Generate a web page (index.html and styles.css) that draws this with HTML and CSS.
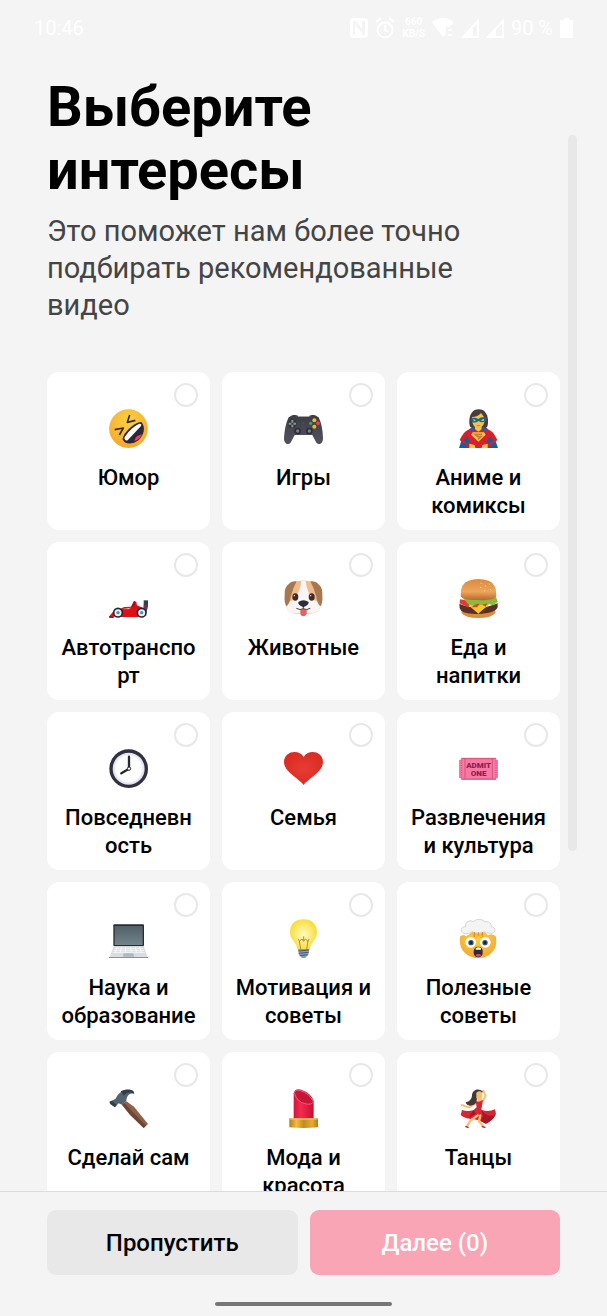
FILE: index.html
```
<!DOCTYPE html>
<html lang="ru">
  <head>
    <meta charset="UTF-8" />
    <meta name="viewport" content="width=device-width, initial-scale=1.0" />
    <title>Выберите интересы</title>
    <link rel="stylesheet" href="styles.css">
  </head>
  <body>
    <header class="status">
      <span>10:46</span>
      <div class="status-icons">
        <svg width="18" height="20" viewBox="0 0 18 20"><path fill="#fff" fill-rule="evenodd" d="M2 0H16L18 2V18L16 20H2L0 18V2ZM3 3V17H5V7L12 15V17H15V3H12V11L6 3Z"/></svg>
        <svg width="20" height="22" viewBox="0 0 20 22" fill="none" stroke="#fff" stroke-width="2"><circle cx="10" cy="13" r="7.5"/><path d="M10 8V13L13 15M1 5L6 1M19 5L14 1"/></svg>
        <div class="speed"><span>660</span><span>KB/S</span></div>
        <svg width="22" height="20" viewBox="0 0 22 20"><path fill="#fff" d="M0 4Q11 -4 22 4L18 9H14V16L11 19Z"/><path stroke="#fff" stroke-width="2" d="M16 12H20M16 17H20"/></svg>
        <svg width="18" height="20" viewBox="0 0 18 20"><path fill="none" stroke="#fff" stroke-width="2" d="M2 19L17 3V19Z"/><path fill="#fff" d="M0 20L12 7V20Z"/></svg>
        <svg width="18" height="20" viewBox="0 0 18 20"><path fill="none" stroke="#fff" stroke-width="2" d="M2 19L17 3V19Z"/><path fill="#fff" d="M0 20L10 9V20Z"/></svg>
        <span>90 %</span>
        <svg width="13" height="20" viewBox="0 0 13 20"><path fill="#fff" d="M4 0H9V2H12L13 3V19L12 20H1L0 19V3L1 2H4Z"/></svg>
      </div>
    </header>

    <main class="content">
      <h1>Выберите интересы</h1>
      <p class="hint">Это поможет нам более точно подбирать рекомендованные видео</p>

      <div class="grid">
        <label class="card">
          <input type="checkbox" name="interest" value="humor" />
          <svg class="emoji" viewBox="0 0 117 117">
            <defs><radialGradient id="face" cx=".5" cy=".3" r=".75"><stop offset="0" stop-color="#fdd043"/><stop offset="1" stop-color="#f3a52f"/></radialGradient></defs>
            <circle cx="58.500" cy="59" r="58" fill="url(#face)"/>
            <path fill="none" stroke="#382d2e" stroke-width="5" stroke-linejoin="round" d="M62 18L55 40L79 34M17 62L43 57L31 78"/>
            <path fill="#2c2636" d="M41 91C40 76 74 39 97 39C111 54 105 78 89 93C72 107 46 108 41 91Z"/>
            <path fill="#fff" d="M46 87C52 74 72 52 91 44Q99 43 96 51L56 94Q48 97 46 87Z"/>
            <path fill="#e34854" d="M76 96Q79 80 99 76Q91 94 76 96Z"/>
          </svg>
          <span class="name">Юмор</span>
        </label>

        <label class="card">
          <input type="checkbox" name="interest" value="games" />
          <svg class="emoji" viewBox="0 0 117 117">
            <defs><linearGradient id="pad" x2="0" y2="1"><stop offset="0" stop-color="#3d3d46"/><stop offset="1" stop-color="#53515f"/></linearGradient></defs>
            <path fill="#292a31" d="M17 23Q26 15 42 20V25H76V20Q92 15 101 23Z"/>
            <path fill="url(#pad)" d="M14 25Q26 16 42 23H76Q92 16 104 25Q116 50 117 88C117 108 101 109 96 99L85 78H32L21 99C16 109 0 108 0 88Q2 50 14 25Z"/>
            <circle cx="25" cy="44" r="13" fill="#34343c"/>
            <path stroke="#8b929b" stroke-width="6" d="M25 33V41M25 47V55M14 44H22M28 44H36"/>
            <circle cx="41" cy="66" r="10" fill="#2d2d35"/><circle cx="41" cy="66" r="5" fill="#75808a"/>
            <circle cx="76" cy="66" r="10" fill="#2d2d35"/><circle cx="76" cy="66" r="5" fill="#75808a"/>
            <circle cx="58" cy="43" r="4" fill="#31594f"/>
            <circle cx="91" cy="34" r="6" fill="#f4b82e"/><circle cx="102" cy="43" r="6" fill="#e8433e"/>
            <circle cx="80" cy="43" r="5" fill="#37a55d"/><circle cx="91" cy="53" r="6" fill="#eeb62f"/>
          </svg>
          <span class="name">Игры</span>
        </label>

        <label class="card">
          <input type="checkbox" name="interest" value="anime" />
          <svg class="emoji" viewBox="0 0 117 117">
            <path fill="#165f9e" d="M39 54L80 54Q104 72 117 117H0Q12 72 39 54Z"/>
            <path fill="#4c3c3b" d="M34 54C28 44 28 1 59 1S90 44 84 54Q74 60 59 60T34 54Z"/>
            <path fill="#d4212c" d="M38 61H78C98 62 104 72 115 93L86 117L78 106V117H38V106L31 117L2 93C14 72 20 62 38 61Z"/>
            <path fill="#165f9e" d="M22 83L33 97L28 106L14 94ZM94 83L83 97L88 106L103 94Z"/>
            <path fill="#f6c346" d="M48 45H68V61L58 68L48 61ZM39 24Q56 24 66 12L78 28Q77 56 58 58Q40 56 39 30Z"/>
            <path fill="#176a86" d="M36 27Q50 24 58 30Q67 22 81 25V36Q70 44 59 36Q48 44 37 38Z"/>
            <path fill="#bde5ef" d="M43 31L52 34L44 36ZM75 30L65 34L74 36Z"/>
            <path stroke="#d5774b" stroke-width="3" d="M53 50H64"/>
            <path fill="#f7c84c" d="M41 70H75L80 77L58 98L36 77Z"/>
            <path fill="none" stroke="#c9802e" stroke-width="5" d="M69 76H48L56 83H66L57 91"/>
            <path fill="#285ca3" d="M36 58L45 53L50 64L37 66ZM80 58L71 53L67 64L79 66Z"/>
            <path fill="#f6c346" d="M31 104L47 108L49 117H31ZM86 104L70 108L68 117H86Z"/>
          </svg>
          <span class="name">Аниме и комиксы</span>
        </label>

        <label class="card">
          <input type="checkbox" name="interest" value="auto" />
          <svg class="emoji" viewBox="0 0 117 117">
            <path fill="#343e4e" d="M104 64H118V82H104Z"/><path fill="#743348" d="M104 79H118L112 102H101Z"/>
            <path fill="#de1015" d="M1 112L12 98L46 84L66 83L75 66L82 69L84 79L105 88L112 110L83 114H38Z"/>
            <path fill="#a60f27" d="M0 111H14V117H1ZM75 66L80 68L76 85L67 83Z"/>
            <path fill="#edb5b7" d="M39 90L66 86L59 91Z"/>
            <g fill="#e4f2f8" stroke="#222838" stroke-width="5"><circle cx="27" cy="101" r="13"/><circle cx="98" cy="101" r="13"/></g>
            <g fill="#6088a7"><circle cx="27" cy="101" r="5"/><circle cx="98" cy="101" r="5"/></g>
          </svg>
          <span class="name">Автотранспорт</span>
        </label>

        <label class="card">
          <input type="checkbox" name="interest" value="animals" />
          <svg class="emoji" viewBox="0 0 117 117">
            <path fill="#f1ba8b" d="M31 9Q58 0 86 9Q102 30 101 59L109 84Q103 102 79 104H37Q13 102 7 84L16 59Q16 29 31 9Z"/>
            <path fill="#f8f6f5" d="M52 5H65Q66 25 76 45Q78 65 101 66L109 84Q104 102 79 103H37Q11 101 7 84L16 66Q39 65 41 45Q51 25 52 5Z"/>
            <path fill="#a57852" d="M38 7Q22 5 12 17Q1 25 2 49Q0 74 8 82Q19 70 20 53Q27 27 38 7Z"/>
            <path fill="#a57852" d="M79 7Q95 5 105 17Q116 25 115 49Q117 74 109 82Q98 70 97 53Q90 27 79 7Z"/>
            <ellipse cx="34" cy="54" rx="9" ry="11" fill="#422a27"/><ellipse cx="83" cy="54" rx="9" ry="11" fill="#422a27"/>
            <circle cx="31" cy="50" r="2" fill="#fff"/><circle cx="80" cy="50" r="2" fill="#fff"/>
            <path fill="#e86060" d="M49 91H68V103Q66 112 58 112T49 103Z"/>
            <path fill="none" stroke="#4c3b42" stroke-width="3" d="M58 81V91M37 88Q49 95 58 89Q67 95 79 88"/>
            <path fill="#292d3d" d="M43 69Q58 58 74 69Q75 78 58 85Q41 78 43 69Z"/>
          </svg>
          <span class="name">Животные</span>
        </label>

        <label class="card">
          <input type="checkbox" name="interest" value="food" />
          <svg class="emoji" viewBox="0 0 117 117">
            <defs><linearGradient id="bun" x2="0" y2="1"><stop offset="0" stop-color="#dc893d"/><stop offset=".6" stop-color="#eca65b"/><stop offset="1" stop-color="#bb6630"/></linearGradient></defs>
            <path fill="#d78c42" d="M8 88H109V102Q98 117 58 117T8 102Z"/>
            <path fill="#5d3027" d="M1 74Q58 98 116 73V85Q108 103 58 105T2 88Z"/>
            <path fill="#df3d31" d="M3 61L33 66L29 86L2 73Z"/>
            <path fill="#87bc3d" d="M7 52L111 54L116 68L103 79L90 76L73 83L56 76L41 82L28 76Z"/>
            <path fill="#fac620" d="M29 79L91 77L71 92L58 104L46 94Z"/>
            <path fill="#d94628" d="M38 85Q48 73 62 74L55 84ZM70 77L85 73L80 83Z"/>
            <path fill="url(#bun)" d="M5 52Q4 12 29 5Q58 -5 89 5Q113 14 112 52Q102 66 58 63Q14 65 5 52Z"/>
            <path stroke="#f5cf91" stroke-width="3" stroke-linecap="round" d="M65 12L67 13M79 20L80 22M90 15L92 16M94 31L95 33M76 36L78 35M64 25L66 26"/>
          </svg>
          <span class="name">Еда и напитки</span>
        </label>

        <label class="card">
          <input type="checkbox" name="interest" value="daily" />
          <svg class="emoji" viewBox="0 0 117 117">
            <defs><radialGradient id="dial"><stop offset=".7" stop-color="#fff"/><stop offset="1" stop-color="#c9c9e1"/></radialGradient></defs>
            <circle cx="59" cy="59" r="53" fill="url(#dial)" stroke="#30303e" stroke-width="10"/>
            <path fill="none" stroke="#27272f" stroke-width="7" stroke-linecap="round" d="M60 58V23M59 60L37 73"/>
            <circle cx="60" cy="59" r="5" fill="#fff" stroke="#27272f" stroke-width="3"/>
          </svg>
          <span class="name">Повседневность</span>
        </label>

        <label class="card">
          <input type="checkbox" name="interest" value="family" />
          <svg class="emoji" viewBox="0 0 117 117">
            <defs><radialGradient id="heart"><stop offset="0" stop-color="#e63c34"/><stop offset="1" stop-color="#dc2c24"/></radialGradient></defs>
            <path fill="url(#heart)" d="M59 108C46 89 0 69 0 39C0 4 47 0 59 24C71 0 117 4 117 39C117 69 72 89 59 108Z"/>
          </svg>
          <span class="name">Семья</span>
        </label>

        <label class="card">
          <input type="checkbox" name="interest" value="culture" />
          <svg class="emoji" viewBox="0 0 117 117">
            <path fill="#f779a1" d="M7 26H111Q110 32 117 34V86Q110 86 111 93H7Q7 86 0 86V34Q7 33 7 26Z"/>
            <path fill="none" stroke="#c34475" stroke-width="2" d="M18 30V89M100 30V89M8 29H110M8 90H110"/>
            <path fill="none" stroke="#c34475" stroke-width="3" stroke-dasharray="3 4" d="M7 34V88M111 34V88"/>
            <text class="ticket" x="59" y="57">ADMIT</text><text class="ticket" x="59" y="82">ONE</text>
          </svg>
          <span class="name">Развлечения и культура</span>
        </label>

        <label class="card">
          <input type="checkbox" name="interest" value="science" />
          <svg class="emoji" viewBox="0 0 117 117">
            <defs><linearGradient id="screen" x2="0" y2="1"><stop offset="0" stop-color="#526169"/><stop offset="1" stop-color="#72838a"/></linearGradient></defs>
            <rect x="13" y="16" width="92" height="66" rx="3" fill="#2e2a34"/><path fill="url(#screen)" d="M17 21H101V78H17Z"/>
            <path fill="#d9dde2" d="M14 82H104L117 116H1Z"/>
            <path stroke="#fff" stroke-width="2" d="M16 88H102M14 94H105M11 100H108M24 84L19 101M37 84L34 101M50 84L49 101M65 84L67 101M79 84L83 101M92 84L97 101"/>
            <path fill="#aeb8bc" d="M44 103H73L75 113H42Z"/><path fill="#6e757c" d="M0 115H117V120H0Z"/>
          </svg>
          <span class="name">Наука и образование</span>
        </label>

        <label class="card">
          <input type="checkbox" name="interest" value="motivation" />
          <svg class="emoji" viewBox="0 0 117 117">
            <defs><radialGradient id="bulb"><stop offset="0" stop-color="#fffac2"/><stop offset="1" stop-color="#f7df3d"/></radialGradient></defs>
            <path fill="url(#bulb)" d="M18 40C18 14 34 1 59 1S99 15 99 40C99 63 80 70 77 92H41C38 70 18 63 18 40Z"/>
            <path fill="none" stroke="#b78f36" stroke-width="3" d="M50 90L46 66L43 60M68 90L72 66L75 60M45 68L54 60L59 67L64 60L73 68M59 66V52"/>
            <path fill="#8c9caf" d="M42 90H76L73 107L64 117H54L45 107Z"/>
            <path stroke="#485b70" stroke-width="3" d="M43 96L75 93M44 103L74 100M47 110L71 107"/>
          </svg>
          <span class="name">Мотивация и советы</span>
        </label>

        <label class="card">
          <input type="checkbox" name="interest" value="tips" />
          <svg class="emoji" viewBox="0 0 117 117">
            <path fill="url(#face)" d="M4 51L15 48L21 52L31 46L40 35H76L86 49L97 46L110 51C120 90 93 117 58 117S-5 90 4 51Z"/>
            <path fill="#fbbd25" d="M38 33H78L71 58H62L58 50L52 60L43 55Z"/>
            <path fill="#f4f4f5" stroke="#d5d5d8" stroke-width="3" d="M14 43C2 38 6 22 20 23C18 7 34 2 43 8C54 -3 73 0 77 9C88 5 99 13 96 23C109 24 112 38 101 42C91 46 84 39 76 39C63 44 51 43 40 38C31 44 23 45 14 43Z"/>
            <path stroke="#dd8528" stroke-width="3" d="M46 39V54M58 40V50M70 39V53"/>
            <circle cx="35" cy="70" r="16" fill="#fff"/><circle cx="79" cy="70" r="16" fill="#fff"/>
            <circle cx="36" cy="71" r="8" fill="#375267"/><circle cx="78" cy="71" r="8" fill="#375267"/>
            <circle cx="36" cy="71" r="4" fill="#17202d"/><circle cx="78" cy="71" r="4" fill="#17202d"/>
            <rect x="44" y="83" width="27" height="32" rx="13" fill="#33283a"/><path fill="#fff" d="M50 88Q58 82 66 88V92H50Z"/><ellipse cx="58" cy="109" rx="8" ry="4" fill="#e24b5f"/>
          </svg>
          <span class="name">Полезные советы</span>
        </label>

        <label class="card">
          <input type="checkbox" name="interest" value="diy" />
          <svg class="emoji" viewBox="0 0 117 117">
            <path fill="#936047" d="M39 47L51 36L75 53L117 105L104 117L63 77Z"/><path fill="#6e4638" d="M39 47L46 41L68 65L111 110L104 117L63 77Z"/>
            <path fill="#526470" d="M2 38L20 29C29 8 52 -3 72 6L76 14C62 13 54 17 52 35L39 47L29 43L18 55L3 44Z"/>
            <path fill="#313e4d" d="M35 7C49 -1 67 0 73 6L76 14C63 8 52 9 45 20ZM2 38L9 35L22 47L18 55L3 44Z"/>
          </svg>
          <span class="name">Сделай сам</span>
        </label>

        <label class="card">
          <input type="checkbox" name="interest" value="fashion" />
          <svg class="emoji" viewBox="0 0 117 117">
            <defs>
              <linearGradient id="gold"><stop offset="0" stop-color="#b87b19"/><stop offset=".25" stop-color="#f0bd3e"/><stop offset=".5" stop-color="#c18b25"/><stop offset=".8" stop-color="#e6ac31"/><stop offset="1" stop-color="#b87919"/></linearGradient>
              <linearGradient id="stick"><stop offset="0" stop-color="#d6153c"/><stop offset=".35" stop-color="#f42a50"/><stop offset="1" stop-color="#c8102e"/></linearGradient>
            </defs>
            <path fill="url(#stick)" d="M29 13C30 5 37 0 45 1C64 4 83 18 89 36V89H29Z"/>
            <path fill="#c61738" stroke="#fa5878" stroke-width="3" d="M31 11Q36 1 49 5Q77 13 88 38Q84 48 67 45Q38 40 31 11Z"/>
            <path fill="url(#gold)" d="M16 88H102V115Q59 119 16 115Z"/><path stroke="#f4cf68" stroke-width="3" d="M17 90H101"/>
          </svg>
          <span class="name">Мода и красота</span>
        </label>

        <label class="card">
          <input type="checkbox" name="interest" value="dance" />
          <svg class="emoji" viewBox="0 0 117 117">
            <path fill="none" stroke="#f5c273" stroke-width="6" stroke-linejoin="round" stroke-linecap="round" d="M72 36L80 20L73 5M50 43L30 55L8 48"/>
            <path fill="#443936" d="M72 8C58 -5 39 3 39 20Q38 35 20 40Q24 53 40 49Q54 46 54 26Z"/>
            <path fill="#f5c273" d="M52 11Q64 2 70 12V27Q64 36 52 27ZM54 28H66L72 36L57 40Z"/>
            <path fill="#d32736" d="M50 36L60 38L72 33L67 62Q88 71 108 61L111 75Q98 98 80 104L62 94L43 91Q18 89 5 78L9 63Q27 69 44 63L53 55Z"/>
            <path fill="#aa1528" d="M67 62Q84 88 110 77Q100 96 80 104L64 96L72 82ZM44 63L28 86L51 75Z"/>
            <path fill="none" stroke="#f5c273" stroke-width="7" stroke-linejoin="round" stroke-linecap="round" d="M56 79L33 96L24 112M64 79L60 97L73 111"/>
            <path stroke="#c72132" stroke-width="4" d="M19 112L29 116M68 112L79 116"/>
          </svg>
          <span class="name">Танцы</span>
        </label>
      </div>
    </main>
    <div class="thumb"></div>

    <footer>
      <div class="actions">
        <button type="button" class="skip">Пропустить</button>
        <button type="button" class="next">Далее (0)</button>
      </div>
      <div class="home-bar"></div>
    </footer>
  </body>
</html>
```
FILE: styles.css
```
* {
  box-sizing: border-box;
}
body {
  position: relative;
  display: flex;
  flex-direction: column;
  height: 100vh;
  margin: 0;
  background: #f4f4f4;
  color: #000;
  font-family: Roboto, "Noto Sans", sans-serif;
}
.status {
  flex: none;
  display: flex;
  justify-content: space-between;
  align-items: center;
  height: 56px;
  padding: 0 34px;
  color: #fff;
  font-size: 20px;
}
.status-icons {
  display: flex;
  align-items: center;
  gap: 7px;
}
.speed {
  display: flex;
  flex-direction: column;
  font-size: 10px;
  line-height: 12px;
  font-weight: 700;
  text-align: center;
}
.content {
  flex: 1;
  min-height: 0;
  padding: 20px 47px 0;
  overflow-y: auto;
  scrollbar-width: none;
}
h1 {
  max-width: 420px;
  margin: 0;
  font-size: 56px;
  line-height: 63px;
  font-weight: 700;
}
.hint {
  max-width: 440px;
  margin: 11px 0 48px;
  color: #444;
  font-size: 29px;
  line-height: 37px;
}
.grid {
  display: grid;
  grid-template-columns: repeat(3, 1fr);
  gap: 12px;
}
.card {
  position: relative;
  display: flex;
  flex-direction: column;
  align-items: center;
  height: 158px;
  padding: 37px 12px 0;
  border-radius: 12px;
  background: #fff;
  cursor: pointer;
}
.card input {
  position: absolute;
  top: 11px;
  right: 12px;
  width: 24px;
  height: 24px;
  margin: 0;
  border: 2px solid #e8e8e8;
  border-radius: 50%;
  appearance: none;
  cursor: pointer;
}
.card input:checked {
  border-color: #fe2c55;
  background: #fe2c55;
}
.emoji {
  flex: none;
  width: 39px;
  height: 39px;
}
.ticket {
  fill: #8c1f50;
  font-size: 24px;
  font-weight: 900;
  text-anchor: middle;
}
.name {
  width: 100%;
  margin-top: 16px;
  font-size: 22px;
  line-height: 28px;
  font-weight: 500;
  text-align: center;
  overflow-wrap: anywhere;
}
.thumb {
  position: absolute;
  top: 135px;
  right: 30px;
  width: 9px;
  height: 716px;
  border-radius: 5px;
  background: #e8e8e8;
}
footer {
  flex: none;
  padding: 18px 47px 10px;
  border-top: 1px solid #dcdcdc;
}
.actions {
  display: flex;
  gap: 12px;
}
.actions button {
  flex: 1;
  height: 65px;
  padding: 0;
  border: none;
  border-radius: 9px;
  font-family: inherit;
  font-size: 24px;
  font-weight: 500;
  cursor: pointer;
}
.skip {
  background: #e8e8e8;
  color: #000;
}
.next {
  background: #faa5b5;
  color: #fff;
}
.home-bar {
  width: 177px;
  height: 4px;
  margin: 27px auto 0;
  border-radius: 2px;
  background: #777;
}
```
